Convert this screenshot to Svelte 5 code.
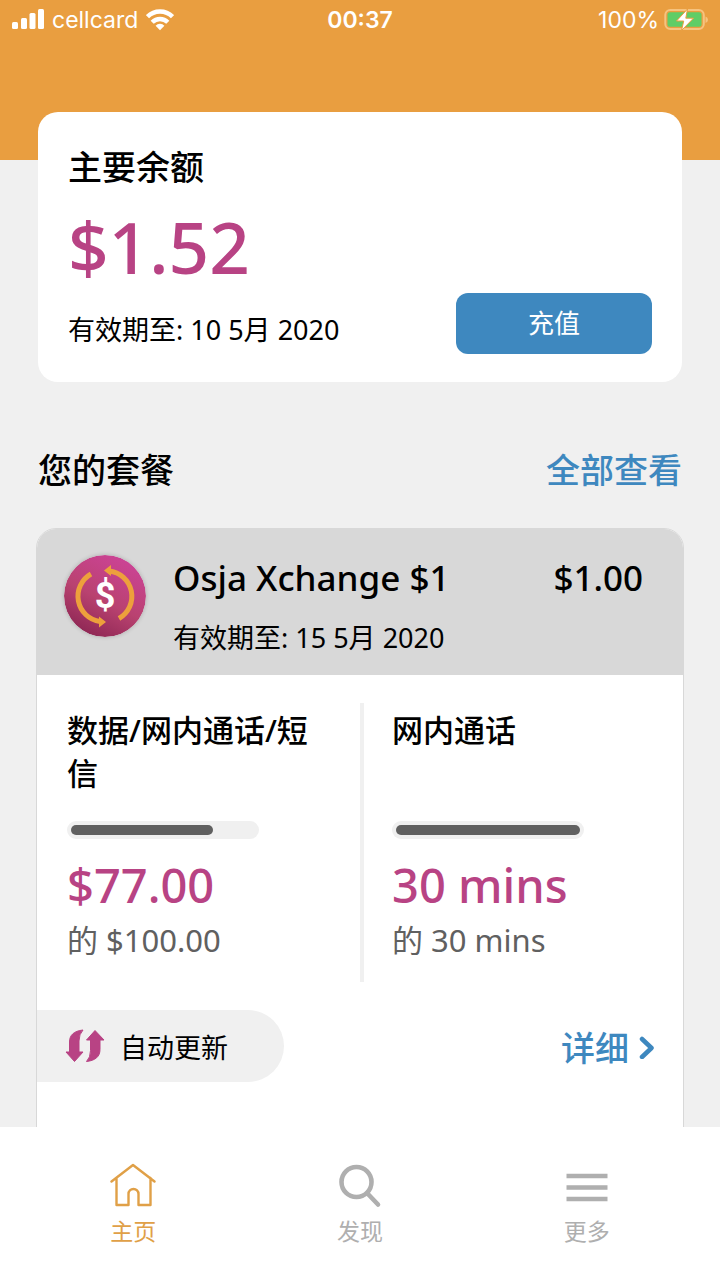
<script lang="ts">
    const usages = [
        { label: '数据/网内通话/短信', percent: 77, left: '$77.00', total: '$100.00' },
        { label: '网内通话', percent: 100, left: '30 mins', total: '30 mins' }
    ];

    const tabs = [
        { id: 'home', label: '主页' },
        { id: 'discover', label: '发现' },
        { id: 'more', label: '更多' }
    ];

    let active = $state('home');
</script>

<div class="app">
    <main class="content">
        <header class="top">
            <div class="status">
                <div class="carrier">
                    <svg width="32" height="22" viewBox="0 0 32 22" fill="#fff" aria-hidden="true">
                        <rect x="0" y="13" width="6" height="7" rx="1.5" />
                        <rect x="9" y="9" width="6" height="11" rx="1.5" />
                        <rect x="17.500" y="4" width="6" height="16" rx="1.5" />
                        <rect x="26" y="0" width="6" height="20" rx="1.5" />
                    </svg>
                    <span>cellcard</span>
                    <svg width="28" height="24" viewBox="0 0 28 24" fill="none" stroke="#fff" stroke-width="4.400" aria-hidden="true">
                        <path d="M1.500 8.700a17.500 17.500 0 0 1 25 0" />
                        <path d="M6.200 14.200a11 11 0 0 1 15.600 0" />
                        <path d="M14 22.300l-4.400-4.600a6 6 0 0 1 8.800 0z" fill="#fff" stroke="none" />
                    </svg>
                </div>
                <strong class="clock">00:37</strong>
                <div class="battery">
                    <span>100%</span>
                    <svg width="44" height="24" viewBox="0 0 44 24" aria-hidden="true">
                        <rect x="1.300" y="2" width="38.500" height="19" rx="5" fill="none" stroke="#f6c37f" stroke-width="2" />
                        <rect x="3.500" y="4.200" width="34" height="14.600" rx="2.500" fill="#5fcd66" />
                        <path d="M41.500 8.500q2.500 1 2.500 3.200t-2.500 3.200z" fill="#f6c37f" />
                        <path d="M23.500 1L12.500 13h7.200L17.500 22.500l12-12.300h-7.700z" fill="#fff" stroke="#e99e40" stroke-width="1" />
                    </svg>
                </div>
            </div>
        </header>

        <section class="balance">
            <div>
                <h2>主要余额</h2>
                <p class="amount">$1.52</p>
                <p class="valid">有效期至: 10 5月 2020</p>
            </div>
            <button type="button" class="topup">充值</button>
        </section>

        <div class="section-head">
            <h2>您的套餐</h2>
            <a href="#plans">全部查看</a>
        </div>

        <article class="plan">
            <div class="plan-head">
                <svg class="plan-icon" width="82" height="82" viewBox="-41 -41 82 82" aria-hidden="true">
                    <defs>
                        <linearGradient id="coin" x1="0.750" y1="0" x2="0.250" y2="1">
                            <stop offset="0" stop-color="#cd4398" />
                            <stop offset="0.550" stop-color="#b94270" />
                            <stop offset="1" stop-color="#8b2552" />
                        </linearGradient>
                    </defs>
                    <circle r="41" fill="url(#coin)" />
                    <g fill="none" stroke="#eda03c" stroke-width="5">
                        <path d="M-14-22A25.500 25.500 0 0 0-5 25.500" />
                        <path d="M14 22.500A25.500 25.500 0 0 0 4-25" />
                    </g>
                    <path d="M-1-25.500l7-5.500v11zM1 26l-7-5.500v11z" fill="#eda03c" />
                    <text x="0" y="12" text-anchor="middle">$</text>
                </svg>
                <div class="plan-info">
                    <div class="plan-title">
                        <h3>Osja Xchange $1</h3>
                        <span>$1.00</span>
                    </div>
                    <p class="valid">有效期至: 15 5月 2020</p>
                </div>
            </div>

            <div class="usages">
                {#each usages as usage}
                    <div class="usage">
                        <h4>{usage.label}</h4>
                        <div
                            class="bar"
                            role="progressbar"
                            aria-label={usage.label}
                            aria-valuenow={usage.percent}
                            aria-valuemin="0"
                            aria-valuemax="100"
                        >
                            <div class="fill" style="width: {usage.percent}%"></div>
                        </div>
                        <p class="left">{usage.left}</p>
                        <p class="total">的 {usage.total}</p>
                    </div>
                {/each}
            </div>

            <div class="plan-foot">
                <div class="renew">
                    <svg width="40" height="34" viewBox="0 0 40 34" fill="#b84384" stroke="#b84384" stroke-linejoin="round" aria-hidden="true">
                        <path d="M18 1C9 2 4.500 6 4.500 13v10H1l8.500 9.500L18 23h-4V12q0-7 4-11z" />
                        <path d="M21.500 32.500c9-1 13.500-5 13.500-12V11h4L30 1.500 21.500 11h4v10.500q0 7-4 11z" />
                    </svg>
                    <span>自动更新</span>
                </div>
                <a class="details" href="#details">
                    详细
                    <svg width="16" height="26" viewBox="0 0 16 26" fill="none" stroke="#3e88bf" stroke-width="4.500" stroke-linecap="round" stroke-linejoin="round" aria-hidden="true">
                        <path d="M3 6l9.500 9L3 24" />
                    </svg>
                </a>
            </div>
        </article>
    </main>

    <nav class="tabs">
        {#each tabs as tab}
            <button type="button" class:active={active === tab.id} onclick={() => (active = tab.id)}>
                <svg width="46" height="46" viewBox="0 0 46 46" fill="none" stroke="currentColor" aria-hidden="true">
                    {#if tab.id === 'home'}
                        <path
                            d="M1.500 19.500L23 3l21.500 16.500M6.500 16v27h12V32a5 5 0 0 1 10 0v11h12V16"
                            stroke-width="2.400"
                            stroke-linecap="round"
                            stroke-linejoin="round"
                        />
                    {:else if tab.id === 'discover'}
                        <circle cx="19.500" cy="20" r="15" stroke-width="4.600" />
                        <path d="M30.500 31.500L41 42.500" stroke-width="4.600" stroke-linecap="round" />
                    {:else}
                        <path d="M2.500 14h41M2.500 25.500h41M2.500 37h41" stroke-width="4.600" />
                    {/if}
                </svg>
                <span>{tab.label}</span>
            </button>
        {/each}
    </nav>
</div>

<style>
    :global(body) {
        margin: 0;
    }

    .app {
        display: flex;
        flex-direction: column;
        height: 100vh;
        background: #f0f0f0;
        color: #000;
        font-family: "Noto Sans", "Noto Sans CJK SC", sans-serif;
    }

    h2, h3, h4, p {
        margin: 0;
    }

    a {
        color: #3e88bf;
        text-decoration: none;
    }

    button {
        border: none;
        padding: 0;
        font-family: inherit;
        cursor: pointer;
    }

    .content {
        flex: 1;
        min-height: 0;
        overflow-y: auto;
        scrollbar-width: none;
    }

    .top {
        height: 160px;
        background: #e99e40;
    }

    /* status bar */
    .status {
        display: grid;
        grid-template-columns: 1fr auto 1fr;
        align-items: center;
        height: 40px;
        padding: 0 12px;
        color: #fff;
        font-family: Inter, sans-serif;
        font-size: 23px;
    }

    .carrier, .battery {
        display: flex;
        align-items: center;
        gap: 8px;
    }

    .battery {
        justify-content: flex-end;
        gap: 5px;
    }

    .clock {
        font-weight: 600;
    }

    /* main balance */
    .balance {
        position: relative;
        display: flex;
        justify-content: space-between;
        align-items: flex-end;
        margin: -48px 38px 0;
        padding: 28px 30px;
        border-radius: 20px;
        background: #fff;
    }

    h2 {
        font-size: 34px;
        font-weight: 500;
        line-height: 54px;
    }

    .amount {
        margin-bottom: 6px;
        color: #b84384;
        font-size: 71px;
        font-weight: 500;
        line-height: 106px;
    }

    .valid {
        font-size: 27px;
        line-height: 48px;
    }

    .topup {
        width: 196px;
        height: 61px;
        padding-bottom: 4px;
        border-radius: 12px;
        background: #3e88bf;
        color: #fff;
        font-size: 26px;
    }

    .section-head {
        display: flex;
        justify-content: space-between;
        align-items: center;
        margin: 61px 38px 31px;
    }

    .section-head a {
        font-size: 34px;
        font-weight: 500;
        line-height: 54px;
    }

    /* plan card */
    .plan {
        margin: 0 36px;
        padding-bottom: 72px;
        border: 1px solid #d8d8d8;
        border-radius: 20px;
        overflow: hidden;
        background: #fff;
    }

    .plan-head {
        display: flex;
        gap: 27px;
        padding: 25px 40px 13px 27px;
        background: #d8d8d8;
    }

    .plan-icon {
        flex: none;
        margin-top: 1px;
        border-radius: 50%;
        box-shadow: 0 0 4px rgba(0, 0, 0, 0.2);
    }

    .plan-icon text {
        fill: #fff;
        font-family: Roboto, sans-serif;
        font-size: 36px;
        font-weight: 700;
    }

    .plan-info {
        flex: 1;
    }

    .plan-title {
        display: flex;
        justify-content: space-between;
        margin-bottom: 12px;
        font-size: 35px;
        font-weight: 500;
        line-height: 48px;
    }

    h3 {
        font-size: inherit;
        font-weight: inherit;
    }

    .usages {
        display: flex;
        margin: 28px 0;
    }

    .usage {
        box-sizing: border-box;
        width: 50%;
        padding: 6px 28px 22px 30px;
    }

    .usage + .usage {
        padding-left: 28px;
        border-left: 4px solid #f0f0f0;
    }

    h4 {
        min-height: 86px;
        font-size: 31px;
        font-weight: 500;
        line-height: 43px;
    }

    .bar {
        box-sizing: border-box;
        width: 192px;
        margin: 26px 0 17px;
        padding: 4px;
        border-radius: 9px;
        background: #f0f0f0;
    }

    .fill {
        height: 10px;
        border-radius: 5px;
        background: #606060;
    }

    .left {
        color: #b84384;
        font-size: 47px;
        font-weight: 500;
        line-height: 58px;
    }

    .total {
        margin-top: 6px;
        color: #606060;
        font-size: 31px;
        line-height: 40px;
    }

    .plan-foot {
        display: flex;
        justify-content: space-between;
        align-items: center;
        padding-right: 28px;
    }

    .renew {
        display: flex;
        align-items: center;
        gap: 15px;
        height: 72px;
        padding: 0 56px 0 28px;
        border-radius: 0 36px 36px 0;
        background: #f0f0f0;
        font-size: 27px;
    }

    .details {
        display: flex;
        align-items: center;
        gap: 10px;
        font-size: 34px;
        font-weight: 500;
    }

    /* bottom tabs */
    .tabs {
        display: flex;
        padding: 35px 20px 30px;
        background: #fff;
    }

    .tabs button {
        flex: 1;
        display: flex;
        flex-direction: column;
        align-items: center;
        gap: 4px;
        background: none;
        color: #afafaf;
        font-size: 23px;
        line-height: 38px;
    }

    .tabs .active {
        color: #e0a047;
    }
</style>
